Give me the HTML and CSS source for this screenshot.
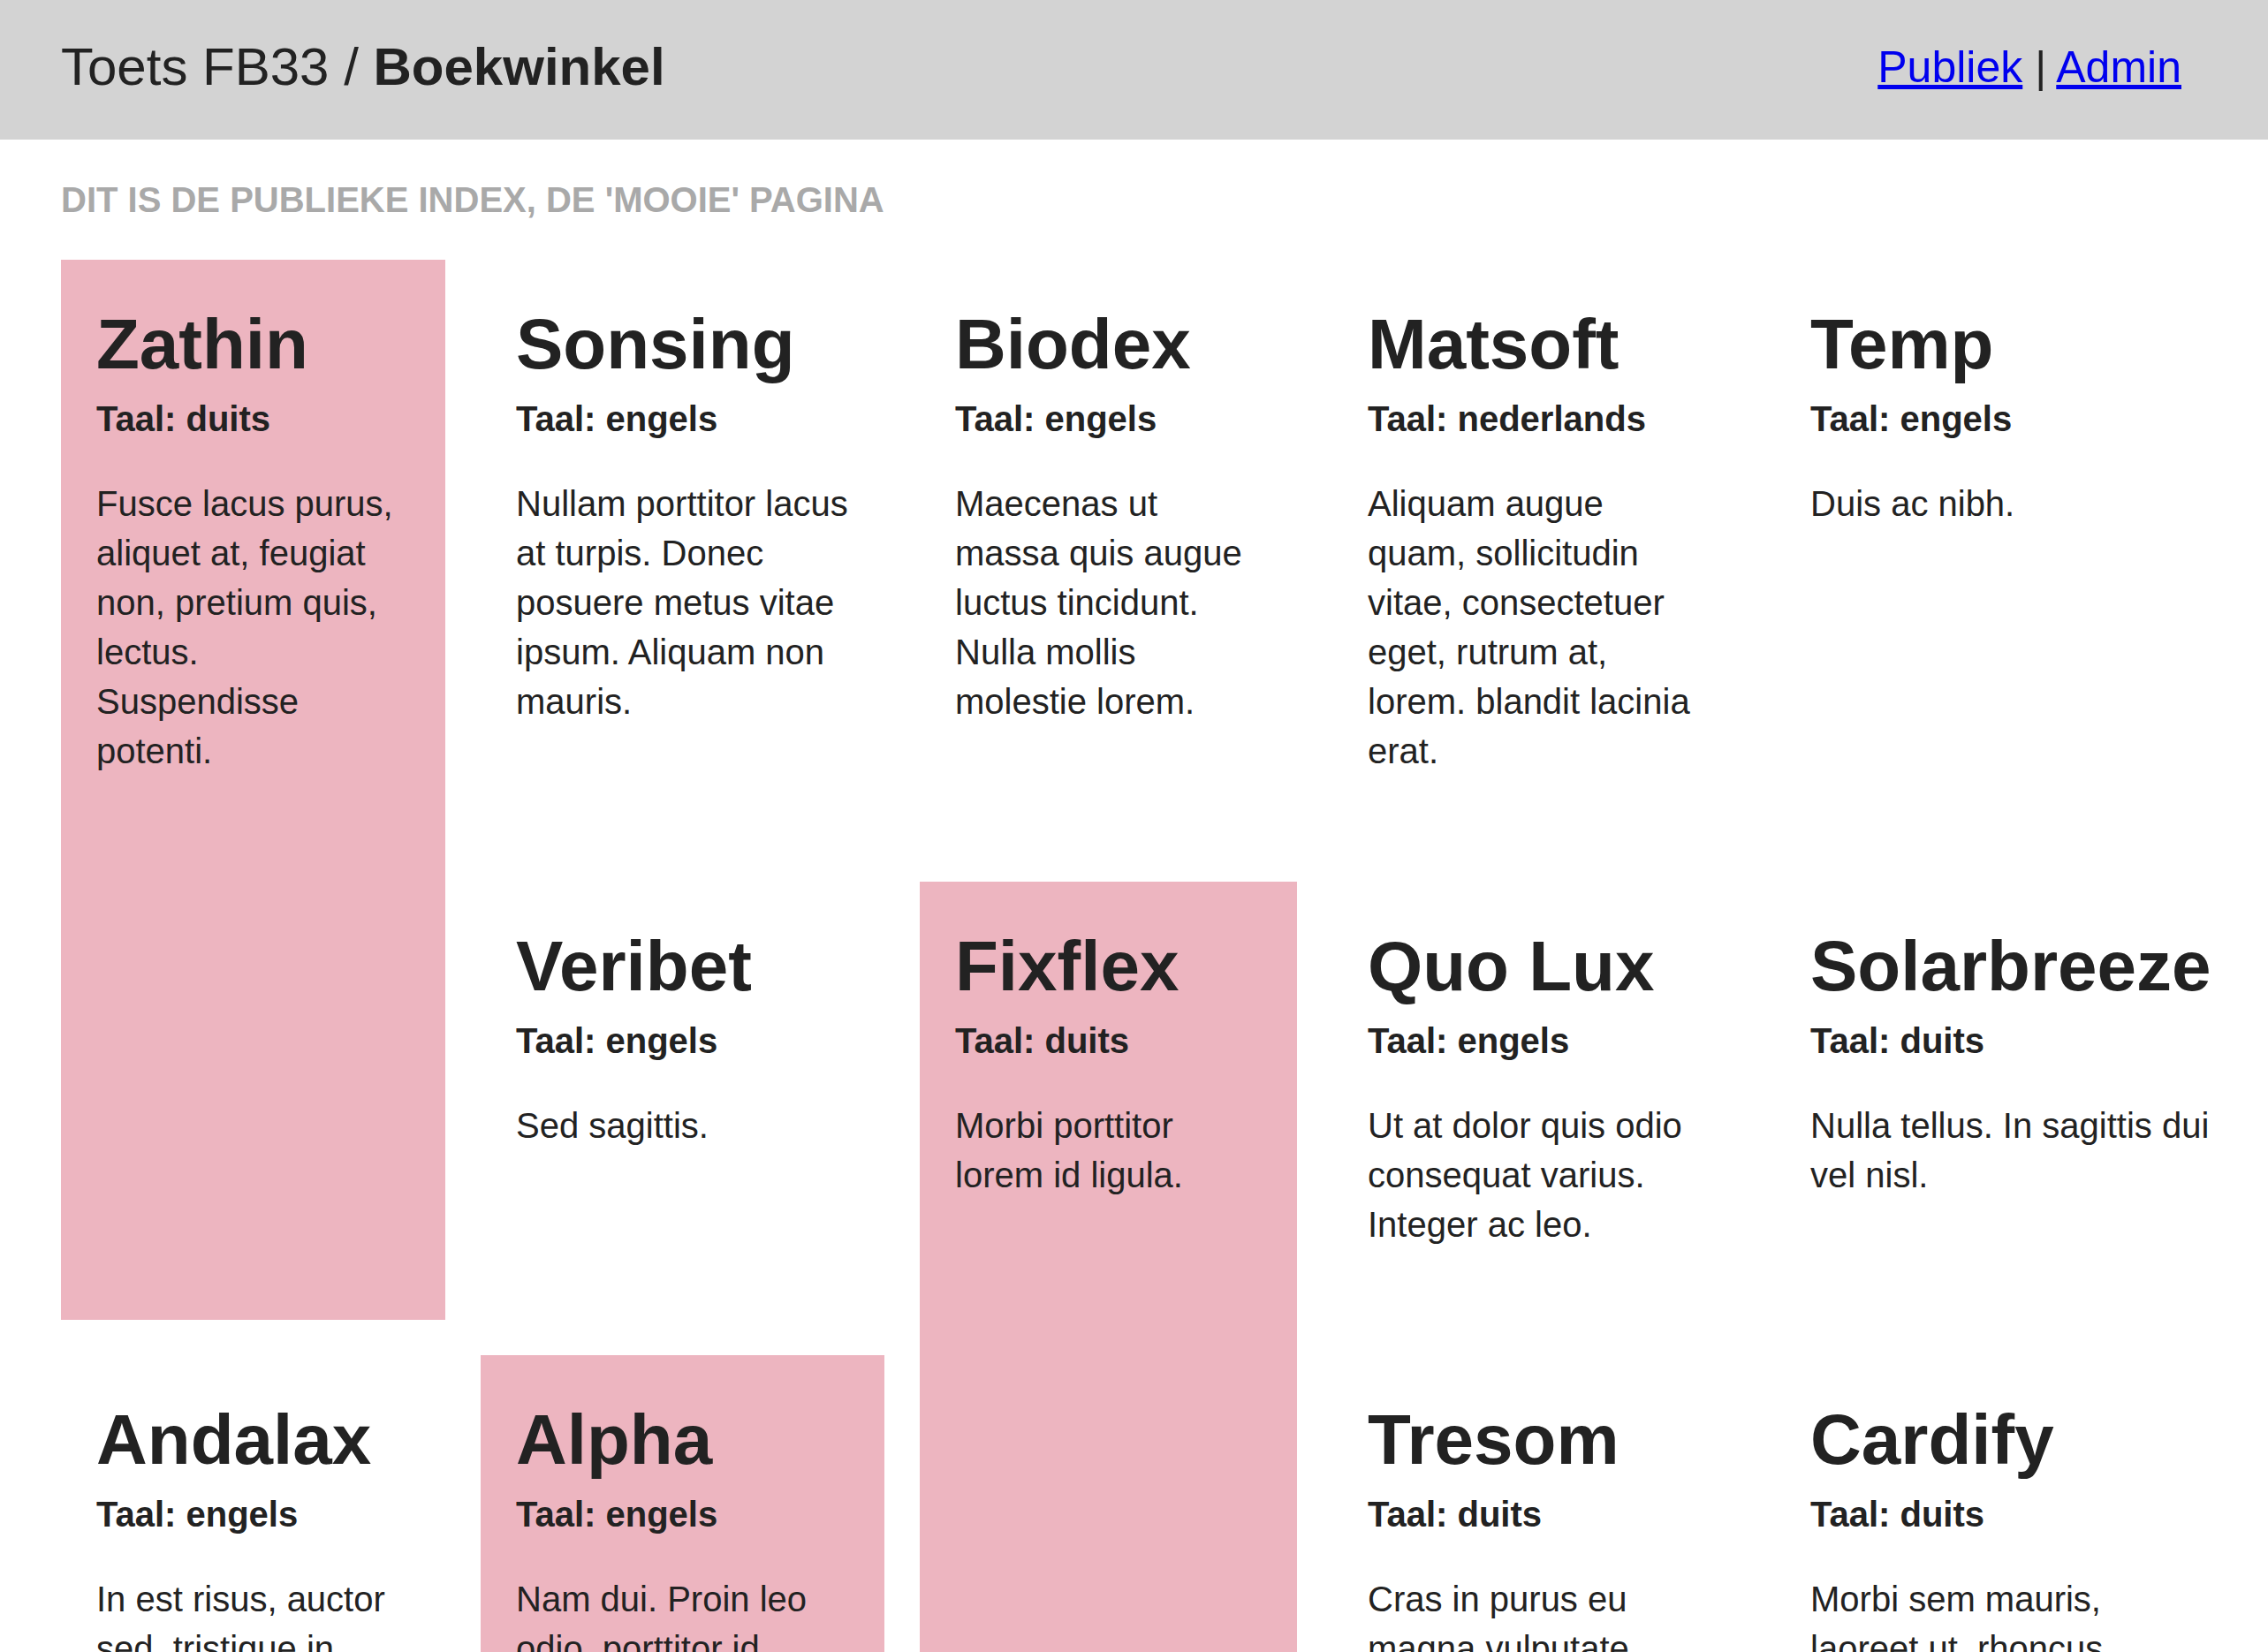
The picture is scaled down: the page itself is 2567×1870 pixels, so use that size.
FILE: index.html
```html
<!DOCTYPE html>
<html lang="nl">
<head>
<meta charset="utf-8">
<title>Toets FB33 / Boekwinkel</title>
<link rel="stylesheet" href="styles.css">
</head>
<body>
<header class="site-header">
  <h1 class="site-title">Toets FB33 / <strong>Boekwinkel</strong></h1>
  <nav class="site-nav"><a href="#">Publiek</a> | <a href="#">Admin</a></nav>
</header>
<main class="page">
  <h2 class="page-intro">DIT IS DE PUBLIEKE INDEX, DE 'MOOIE' PAGINA</h2>
  <section class="books">
    <article class="book book--featured">
      <h3 class="book-title">Zathin</h3>
      <p class="book-lang">Taal: duits</p>
      <p class="book-desc">Fusce lacus purus, aliquet at, feugiat non, pretium quis, lectus. Suspendisse potenti.</p>
    </article>
    <article class="book">
      <h3 class="book-title">Sonsing</h3>
      <p class="book-lang">Taal: engels</p>
      <p class="book-desc">Nullam porttitor lacus at turpis. Donec posuere metus vitae ipsum. Aliquam non mauris.</p>
    </article>
    <article class="book">
      <h3 class="book-title">Biodex</h3>
      <p class="book-lang">Taal: engels</p>
      <p class="book-desc">Maecenas ut massa quis augue luctus tincidunt. Nulla mollis molestie lorem.</p>
    </article>
    <article class="book">
      <h3 class="book-title">Matsoft</h3>
      <p class="book-lang">Taal: nederlands</p>
      <p class="book-desc">Aliquam augue quam, sollicitudin vitae, consectetuer eget, rutrum at, lorem. blandit lacinia erat.</p>
    </article>
    <article class="book">
      <h3 class="book-title">Temp</h3>
      <p class="book-lang">Taal: engels</p>
      <p class="book-desc">Duis ac nibh.</p>
    </article>
    <article class="book">
      <h3 class="book-title">Veribet</h3>
      <p class="book-lang">Taal: engels</p>
      <p class="book-desc">Sed sagittis.</p>
    </article>
    <article class="book book--featured">
      <h3 class="book-title">Fixflex</h3>
      <p class="book-lang">Taal: duits</p>
      <p class="book-desc">Morbi porttitor lorem id ligula.</p>
    </article>
    <article class="book">
      <h3 class="book-title">Quo Lux</h3>
      <p class="book-lang">Taal: engels</p>
      <p class="book-desc">Ut at dolor quis odio consequat varius. Integer ac leo.</p>
    </article>
    <article class="book">
      <h3 class="book-title">Solarbreeze</h3>
      <p class="book-lang">Taal: duits</p>
      <p class="book-desc">Nulla tellus. In sagittis dui vel nisl.</p>
    </article>
    <article class="book">
      <h3 class="book-title">Andalax</h3>
      <p class="book-lang">Taal: engels</p>
      <p class="book-desc">In est risus, auctor sed, tristique in, tempus sit amet, sem.</p>
    </article>
    <article class="book book--featured">
      <h3 class="book-title">Alpha</h3>
      <p class="book-lang">Taal: engels</p>
      <p class="book-desc">Nam dui. Proin leo odio, porttitor id, consequat in, consequat ut, nulla.</p>
    </article>
    <article class="book">
      <h3 class="book-title">Tresom</h3>
      <p class="book-lang">Taal: duits</p>
      <p class="book-desc">Cras in purus eu magna vulputate luctus.</p>
    </article>
    <article class="book">
      <h3 class="book-title">Cardify</h3>
      <p class="book-lang">Taal: duits</p>
      <p class="book-desc">Morbi sem mauris, laoreet ut, rhoncus aliquet, pulvinar sed, nisl.</p>
    </article>
  </section>
</main>
</body>
</html>
```
FILE: styles.css
```css
html {
  scrollbar-width: none;
}

body {
  margin: 0;
  font-family: "Liberation Sans", Arial, sans-serif;
  font-size: 40px;
  line-height: 1.4;
  color: #222;
  background: #fff;
}

.site-header {
  box-sizing: border-box;
  height: 158px;
  padding: 0 98px 6px 69px;
  background: #d3d3d3;
  display: flex;
  align-items: center;
  justify-content: space-between;
}

.site-title {
  margin: 0;
  font-size: 60px;
  font-weight: normal;
  line-height: 1.4;
}

.site-title strong {
  font-weight: bold;
}

.site-nav {
  font-size: 50px;
  line-height: 1.4;
  color: #222;
}

.site-nav a {
  color: #0000ee;
}

.page {
  padding: 0 69px;
}

.page-intro {
  margin: 40px 0;
  font-size: 40px;
  font-weight: bold;
  line-height: 1.4;
  color: #a9a9a9;
}

.books {
  display: grid;
  grid-template-columns: 435px 457px 427px 461px 533px;
  gap: 40px;
}

.book {
  padding: 40px;
}

.book--featured {
  grid-row: span 2;
  background: #edb5c0;
}

.book-title {
  margin: 0;
  font-size: 80px;
  font-weight: bold;
  line-height: 1.4;
}

.book-lang {
  margin: 0;
  font-weight: bold;
}

.book-desc {
  margin: 40px 0;
}
```
